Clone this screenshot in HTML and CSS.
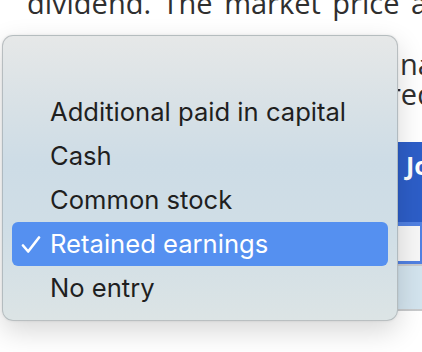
FILE: index.html
```html
<!DOCTYPE html>
<html>
<head>
<meta charset="utf-8">
<link rel="stylesheet" href="styles.css">
</head>
<body>
<div class="page">
  <p class="para first">dividend. The market price a</p>
  <div class="para second">
    <div class="line"><span class="lead">Prepare the journal entry to record the declaration of the additio</span><span class="tail">na</span></div>
    <div class="line"><span class="lead lead-short">If no entry is required, select "No entry" where requi</span><span class="tail">red</span></div>
  </div>
  <div class="table">
    <div class="thead">
      <div class="cell lead-cell">View transaction list</div>
      <div class="cell head-text">Jo</div>
    </div>
    <div class="trow active">
      <div class="cell lead-cell"></div>
      <div class="cell input-cell"><div class="input"></div></div>
    </div>
    <div class="trow plain">
      <div class="cell lead-cell"></div>
      <div class="cell"></div>
    </div>
  </div>
</div>

<div class="menu">
  <div class="item empty"></div>
  <div class="item">Additional paid in capital</div>
  <div class="item">Cash</div>
  <div class="item">Common stock</div>
  <div class="item selected">
    <svg class="check" width="20" height="18" viewBox="0 0 20 18"><path d="M2 9.5 L7.2 15.5 L18 1.5" fill="none" stroke="#fff" stroke-width="2.6" stroke-linecap="round" stroke-linejoin="round"/></svg>
    Retained earnings
  </div>
  <div class="item">No entry</div>
</div>
</body>
</html>
```

FILE: styles.css
```css
html, body {
  margin: 0;
  padding: 0;
  background: #ffffff;
}
body {
  width: 422px;
  height: 352px;
  overflow: hidden;
  position: relative;
  font-family: "Open Sans", "DejaVu Sans", sans-serif;
  color: #2f2f2f;
}
.page {
  padding-left: 27px;
}
.para {
  font-size: 29px;
  line-height: 29px;
  margin: 0;
  white-space: nowrap;
}
.para.first {
  margin-top: -12px;
  word-spacing: 4px;
}
.para.second {
  margin-top: 32px;
  line-height: 30px;
}
.line {
  display: flex;
}
.lead {
  flex: none;
  width: 373px;
  overflow: hidden;
  color: transparent;
}
.lead-short {
  width: 362px;
}
.table {
  margin-top: 33px;
}
.thead, .trow {
  display: flex;
}
.cell {
  flex: none;
}
.lead-cell {
  width: 371px;
}
.thead {
  height: 80px;
  background: #2d5ec8;
  color: #ffffff;
  font-weight: 700;
  font-size: 25px;
}
.thead .lead-cell {
  color: transparent;
  overflow: hidden;
  white-space: nowrap;
}
.head-text {
  padding-top: 6px;
  padding-left: 8px;
  white-space: nowrap;
}
.trow.active {
  height: 42px;
  background: #5181e2;
  border-bottom: 2px solid #c8cacc;
}
.input-cell {
  padding: 4px 0 3px 0;
  width: 22px;
  display: flex;
}
.input {
  flex: 1;
  background: #f7f7f7;
}
.trow.plain {
  height: 43px;
  background: #d3e4ee;
  border-bottom: 2px solid #c8cacc;
}
.trow.plain .cell:last-child {
  flex: 1;
}

.menu {
  position: absolute;
  left: 2px;
  top: 35px;
  width: 376px;
  padding: 10px 9px;
  border: 1px solid rgba(150, 156, 160, 0.55);
  border-radius: 11px;
  background: linear-gradient(180deg, #e6e8e8 0%, #d8e1e6 25%, #cddce6 45%, #d0dee6 70%, #dce4e5 100%);
  box-shadow: 0 10px 28px rgba(0, 0, 0, 0.16), 0 0 3px rgba(0, 0, 0, 0.08);
  font-family: Inter, "Open Sans", sans-serif;
  font-size: 25.6px;
  color: #1f1f1f;
}
.item {
  position: relative;
  height: 44px;
  line-height: 44px;
  padding-left: 38px;
  border-radius: 6px;
  white-space: nowrap;
}
.item.selected {
  background: #5590f0;
  color: #ffffff;
}
.check {
  position: absolute;
  left: 9px;
  top: 14px;
}
```
